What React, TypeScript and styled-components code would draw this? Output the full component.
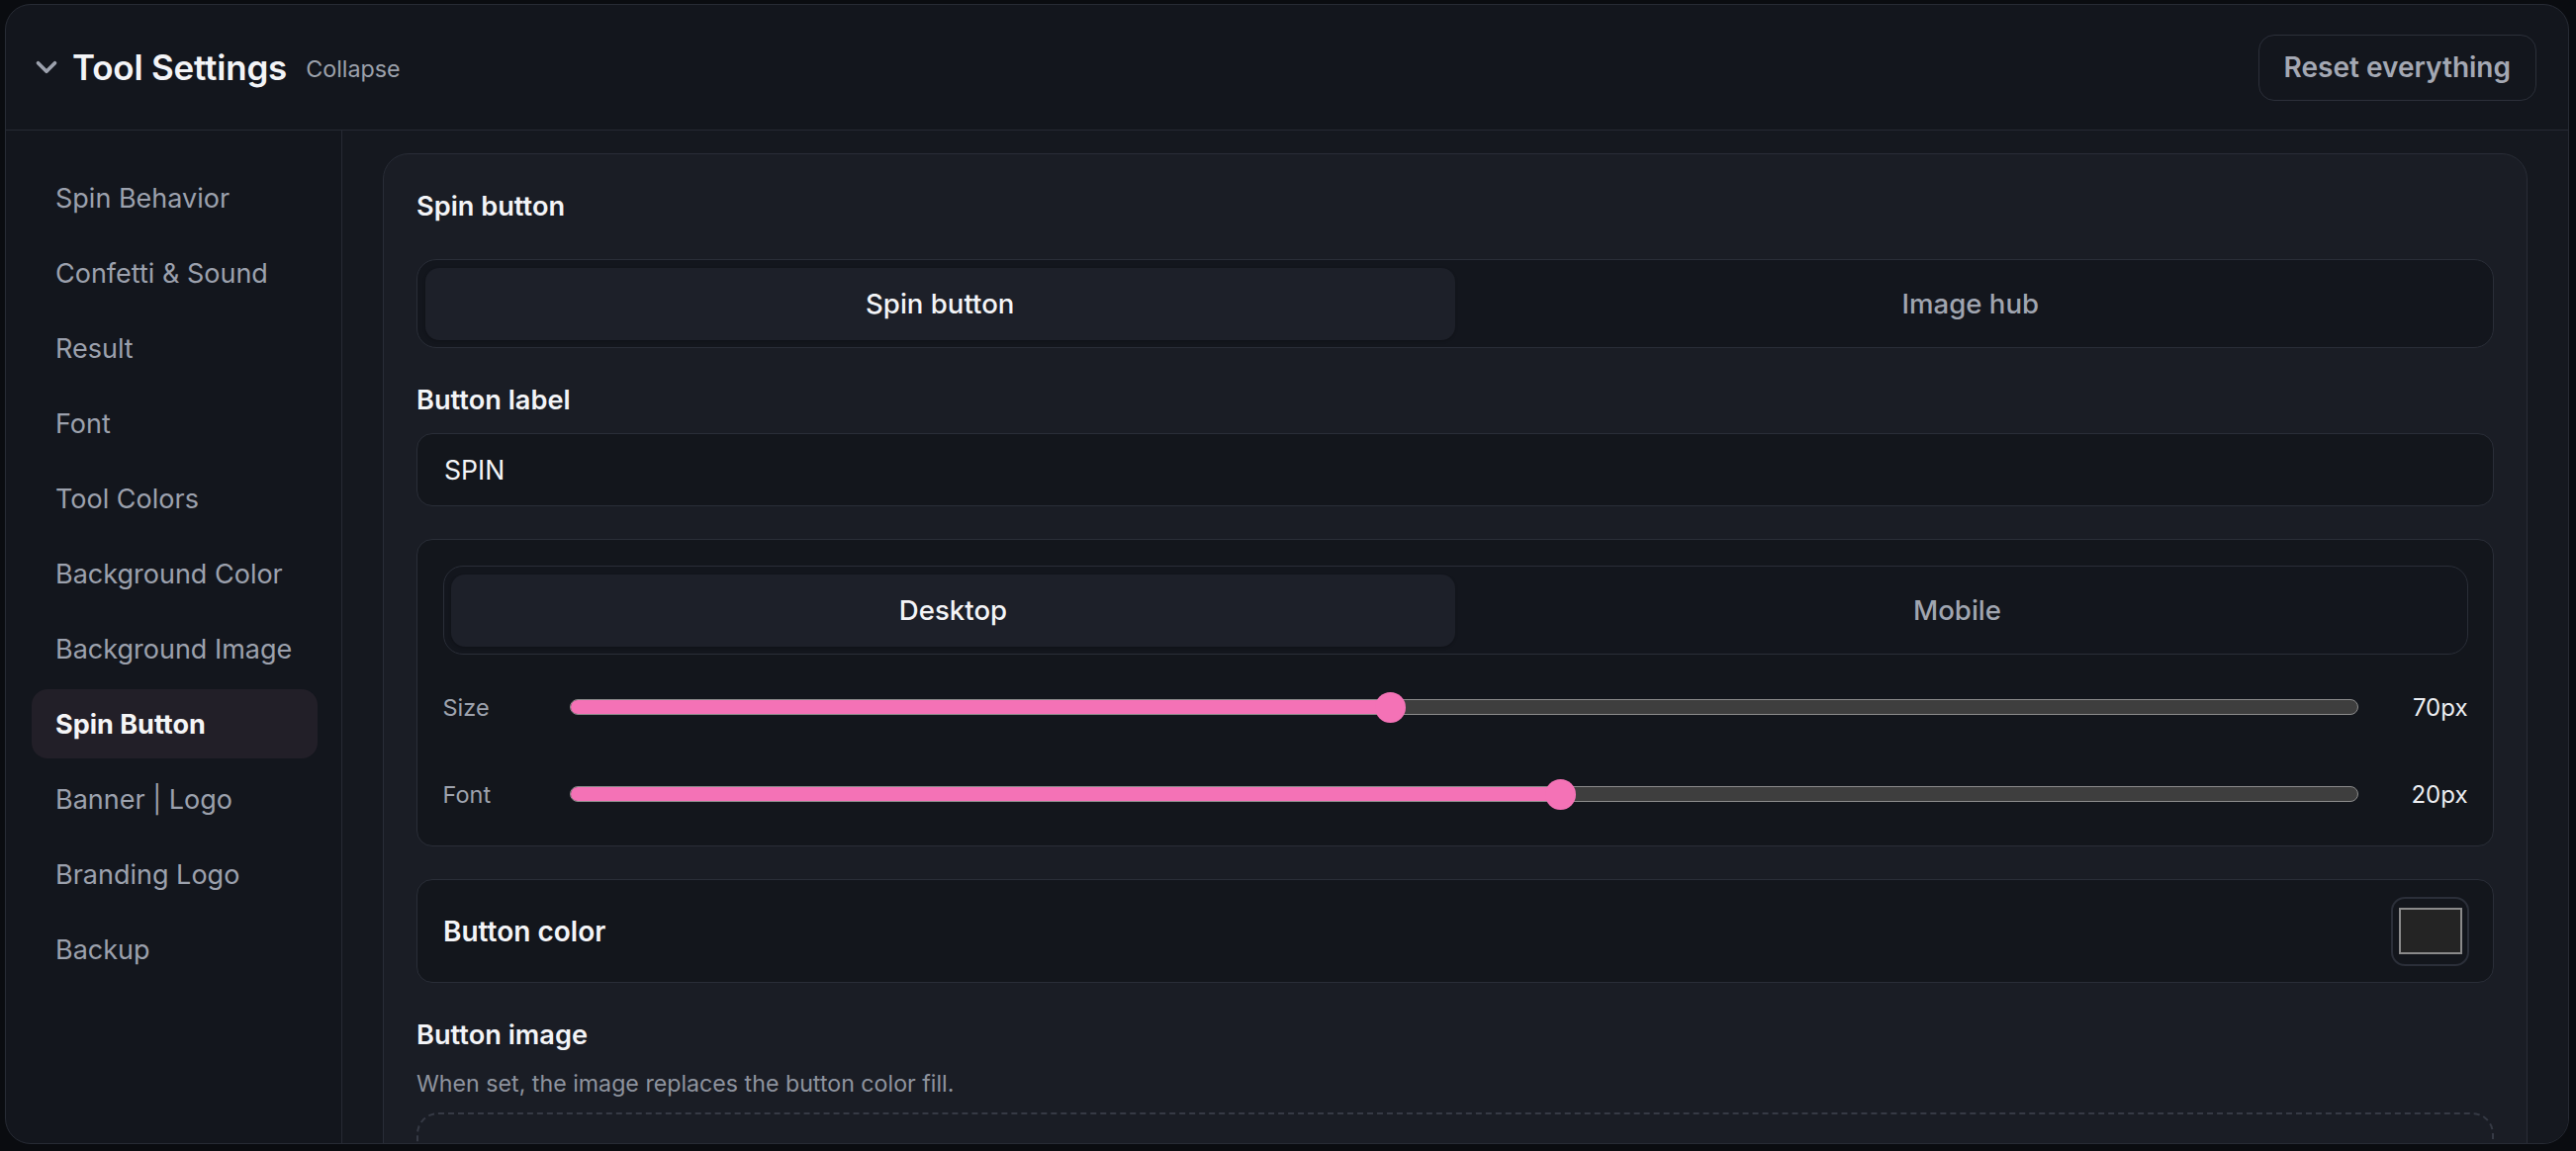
import styled, { createGlobalStyle } from 'styled-components'
import { ChevronDown } from 'lucide-react'

const GlobalStyle = createGlobalStyle`
  html, body {
    margin: 0;
    padding: 0;
    background: #0a0c10;
    font-family: Inter, "Noto Sans", "Liberation Sans", sans-serif;
    overflow: hidden;
  }
  * {
    box-sizing: border-box;
  }
`

const Page = styled.div`
  padding: 4px 7px 0 5px;
  height: 1164px;
`

const Frame = styled.div`
  height: 1153px;
  display: flex;
  flex-direction: column;
  background: #13161d;
  border: 1.5px solid #272b34;
  border-radius: 26px;
  overflow: hidden;
`

const Header = styled.header`
  height: 127px;
  flex-shrink: 0;
  display: flex;
  align-items: center;
  justify-content: space-between;
  padding: 0 32px 0 24px;
  border-bottom: 1.5px solid #262a33;
`

const HeaderLeft = styled.div`
  display: flex;
  align-items: center;
`

const Toggle = styled.span`
  display: flex;
  color: #9ca1ad;
  margin-right: 9px;
`

const Title = styled.h1`
  margin: 0;
  font-size: 35px;
  font-weight: 600;
  color: #f3f4f7;
  letter-spacing: -0.2px;
  line-height: 1.2;
`

const CollapseLink = styled.span`
  margin-left: 19px;
  margin-top: 3px;
  font-size: 23.3px;
  color: #9ca1ab;
`

const ResetButton = styled.button`
  height: 67px;
  padding: 0 25px;
  background: transparent;
  border: 1.5px solid #2c303a;
  border-radius: 16px;
  color: #a4a8b3;
  font-family: inherit;
  font-size: 28px;
  font-weight: 600;
`

const Body = styled.div`
  flex: 1;
  min-height: 0;
  display: flex;
`

const Sidebar = styled.nav`
  width: 340px;
  flex-shrink: 0;
  padding: 33px 24px 0 26px;
  border-right: 1.5px solid #262a33;
  display: flex;
  flex-direction: column;
  gap: 6px;
`

const NavItem = styled.div<{ $active?: boolean }>`
  height: 70px;
  display: flex;
  align-items: center;
  padding: 0 24px;
  border-radius: 16px;
  white-space: nowrap;
  font-size: 27px;
  font-weight: ${(p) => (p.$active ? 700 : 400)};
  color: ${(p) => (p.$active ? '#f5f5f7' : '#9ca1ad')};
  background: ${(p) => (p.$active ? '#221f28' : 'transparent')};
`

const Content = styled.main`
  flex: 1;
  min-width: 0;
  padding: 23px 41px 0 41px;
  background: #15181f;
  overflow: hidden;
`

const Card = styled.section`
  background: #1a1d25;
  border: 1.5px solid #292d37;
  border-radius: 26px;
  padding: 33px 33px 60px;
  display: flex;
  flex-direction: column;
  gap: 33px;
`

const Heading = styled.div`
  font-size: 27.2px;
  font-weight: 600;
  color: #f3f4f7;
  line-height: 40px;
`

const Field = styled.div<{ $gap: number }>`
  display: flex;
  flex-direction: column;
  gap: ${(p) => p.$gap}px;
`

const Segmented = styled.div`
  height: 90px;
  display: flex;
  padding: 7.5px;
  background: #13161d;
  border: 1.5px solid #2a2e38;
  border-radius: 20px;
`

const SegmentTab = styled.div<{ $active?: boolean }>`
  flex: 1;
  display: flex;
  align-items: center;
  justify-content: center;
  border-radius: 14px;
  font-size: 27.6px;
  font-weight: 500;
  color: ${(p) => (p.$active ? '#f3f4f7' : '#a0a5b0')};
  background: ${(p) => (p.$active ? '#1d2029' : 'transparent')};
  box-shadow: ${(p) => (p.$active ? '0 1px 3px rgba(0, 0, 0, 0.25)' : 'none')};
`

const TextInput = styled.div`
  height: 74px;
  display: flex;
  align-items: center;
  padding: 0 27px;
  background: #13161c;
  border: 1.5px solid #2a2e38;
  border-radius: 16px;
  font-size: 26.6px;
  color: #f3f4f7;
`

const Panel = styled.div`
  background: #13161c;
  border: 1.5px solid #2a2e38;
  border-radius: 16px;
  padding: 26px 25.5px 32px;
  display: flex;
  flex-direction: column;
`

const SliderList = styled.div`
  margin-top: 33px;
  display: flex;
  flex-direction: column;
  gap: 48px;
`

const SliderRow = styled.div`
  height: 40px;
  display: grid;
  grid-template-columns: 101px 1fr 84px;
  column-gap: 27px;
  align-items: center;
`

const SliderLabel = styled.span`
  font-size: 23.5px;
  color: #9ea3ae;
`

const Track = styled.div`
  position: relative;
  height: 16px;
  border-radius: 999px;
  background: #3e3e3e;
  border: 1.5px solid #8c8c8c;
`

const Fill = styled.div`
  position: absolute;
  left: 0;
  top: 0;
  bottom: 0;
  border-radius: 999px;
  background: #f472b6;
`

const Thumb = styled.div`
  position: absolute;
  top: 50%;
  width: 31px;
  height: 31px;
  margin: -15.5px 0 0 -15.5px;
  border-radius: 50%;
  background: #f472b6;
`

const SliderValue = styled.span`
  text-align: right;
  font-size: 24px;
  color: #eceef2;
`

const ColorRow = styled.div`
  height: 105px;
  display: flex;
  align-items: center;
  justify-content: space-between;
  padding: 0 24px 0 26px;
  background: #13161c;
  border: 1.5px solid #2a2e38;
  border-radius: 16px;
`

const RowLabel = styled.span`
  font-size: 28px;
  font-weight: 600;
  color: #f3f4f7;
`

const SwatchFrame = styled.div`
  width: 79px;
  height: 70px;
  display: flex;
  align-items: center;
  justify-content: center;
  border: 2px solid #2b2f39;
  border-radius: 14px;
`

const Swatch = styled.div<{ $color: string }>`
  width: 64px;
  height: 47px;
  background: ${(p) => p.$color};
  border: 2px solid #8a8a8a;
`

const Hint = styled.p`
  margin: 0;
  font-size: 23.2px;
  line-height: 36px;
  color: #8e939e;
`

const DropZone = styled.div`
  height: 220px;
  border: 2.5px dashed #363a45;
  border-radius: 22px;
`

const navItems = [
  'Spin Behavior',
  'Confetti & Sound',
  'Result',
  'Font',
  'Tool Colors',
  'Background Color',
  'Background Image',
  'Spin Button',
  'Banner | Logo',
  'Branding Logo',
  'Backup',
]

const sliders = [
  { label: 'Size', value: 70, pct: 45.9 },
  { label: 'Font', value: 20, pct: 55.4 },
]

const App = () => {
  return (
    <Page>
      <GlobalStyle />
      <Frame>
        <Header>
          <HeaderLeft>
            <Toggle>
              <ChevronDown size={34} strokeWidth={2.6} />
            </Toggle>
            <Title>Tool Settings</Title>
            <CollapseLink>Collapse</CollapseLink>
          </HeaderLeft>
          <ResetButton>Reset everything</ResetButton>
        </Header>
        <Body>
          <Sidebar>
            {navItems.map((item) => (
              <NavItem key={item} $active={item === 'Spin Button'}>
                {item}
              </NavItem>
            ))}
          </Sidebar>
          <Content>
            <Card>
              <Heading>Spin button</Heading>
              <Segmented>
                <SegmentTab $active>Spin button</SegmentTab>
                <SegmentTab>Image hub</SegmentTab>
              </Segmented>
              <Field $gap={13}>
                <Heading>Button label</Heading>
                <TextInput>SPIN</TextInput>
              </Field>
              <Panel>
                <Segmented>
                  <SegmentTab $active>Desktop</SegmentTab>
                  <SegmentTab>Mobile</SegmentTab>
                </Segmented>
                <SliderList>
                  {sliders.map((s) => (
                    <SliderRow key={s.label}>
                      <SliderLabel>{s.label}</SliderLabel>
                      <Track>
                        <Fill style={{ width: `${s.pct}%` }} />
                        <Thumb style={{ left: `${s.pct}%` }} />
                      </Track>
                      <SliderValue>{s.value}px</SliderValue>
                    </SliderRow>
                  ))}
                </SliderList>
              </Panel>
              <ColorRow>
                <RowLabel>Button color</RowLabel>
                <SwatchFrame>
                  <Swatch $color="#242424" />
                </SwatchFrame>
              </ColorRow>
              <Field $gap={11}>
                <Heading>Button image</Heading>
                <Hint>When set, the image replaces the button color fill.</Hint>
                <DropZone />
              </Field>
            </Card>
          </Content>
        </Body>
      </Frame>
    </Page>
  )
}

export default App
